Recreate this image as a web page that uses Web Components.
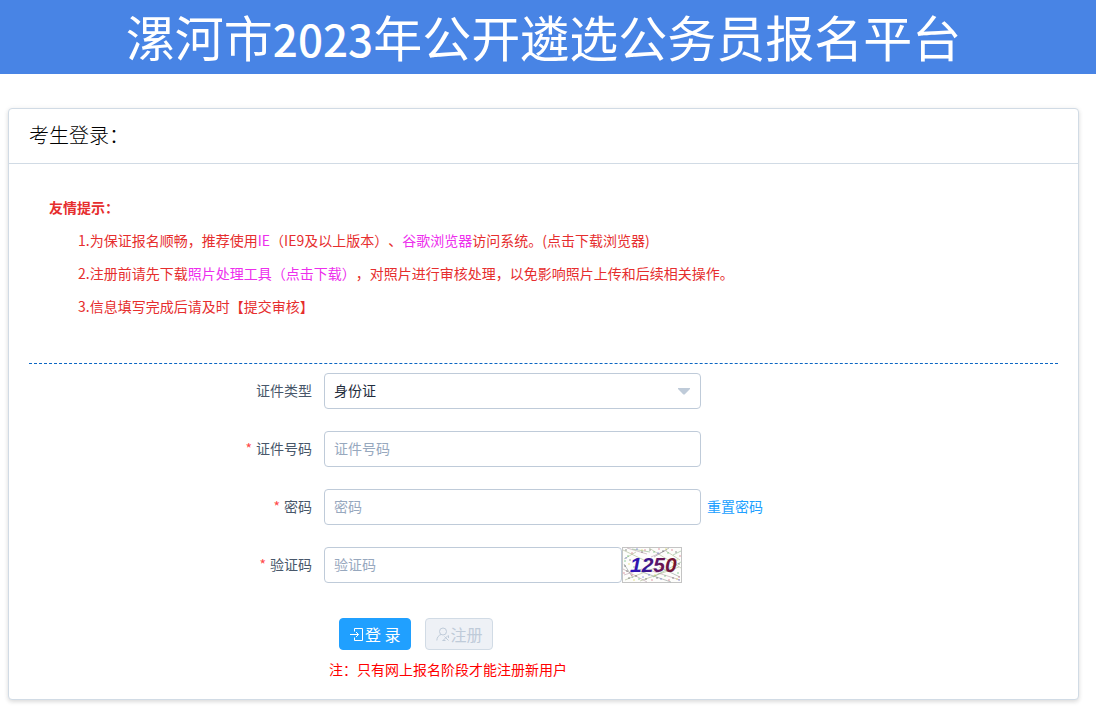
<!DOCTYPE html>
<html lang="zh-CN">
<head>
<meta charset="utf-8">
<meta name="viewport" content="width=device-width, initial-scale=1">
<title>漯河市2023年公开遴选公务员报名平台</title>
<style>
  body {
    margin: 0;
    background: #fff;
    color: #1f2d3d;
    font-family: "Noto Sans CJK SC", "Noto Sans", sans-serif;
    font-size: 14px;
    text-spacing-trim: space-all;
  }
</style>
</head>
<body>
<site-header>漯河市<span slot="year">2023</span><span slot="rest">年公开遴选公务员报名平台</span></site-header>

<login-card>
  <span slot="title">考生登录：</span>
  <login-tips></login-tips>
  <login-form></login-form>
</login-card>

<script>
class SiteHeader extends HTMLElement {
  constructor() {
    super();
    this.attachShadow({ mode: 'open' });
    this.shadowRoot.innerHTML = `
      <style>
        :host { display: block; background: #4884e5; color: #fff; }
        h1 {
          margin: 0;
          padding: 0 9px 3px 0;
          font-size: 49px;
          font-weight: 400;
          line-height: 71px;
          text-align: center;
          white-space: nowrap;
        }
        .year { font-size: 44px; font-weight: 500; line-height: 1; }
      </style>
      <h1><slot></slot><span class="year"><slot name="year"></slot></span><slot name="rest"></slot></h1>
    `;
  }
}

class LoginCard extends HTMLElement {
  constructor() {
    super();
    this.attachShadow({ mode: 'open' });
    this.shadowRoot.innerHTML = `
      <style>
        :host {
          display: block;
          margin: 34px 17px 6px 8px;
          border: 1px solid #d1dbe5;
          border-radius: 4px;
          background: #fff;
          box-shadow: 0 2px 4px rgba(0, 0, 0, .12), 0 0 6px rgba(0, 0, 0, .04);
        }
        h2 {
          margin: 0;
          padding: 0 20px 2px;
          border-bottom: 1px solid #d1dbe5;
          color: #000;
          font-size: 20px;
          font-weight: 300;
          line-height: 52px;
        }
        .body { padding: 27px 20px 13px; }
      </style>
      <h2><slot name="title"></slot></h2>
      <div class="body"><slot></slot></div>
    `;
  }
}

class LoginTips extends HTMLElement {
  constructor() {
    super();
    this.attachShadow({ mode: 'open' });
    this.shadowRoot.innerHTML = `
      <style>
        :host {
          display: block;
          padding: 0 20px 40px;
          border-bottom: 1px dashed #0b66c3;
          color: #e62e2e;
          line-height: 33px;
        }
        p { margin: 0; }
        p + p { padding-left: 29px; }
        .head { font-weight: 700; }
        a { color: #ed2eed; text-decoration: none; }
      </style>
      <p class="head">友情提示：</p>
      <p>1.为保证报名顺畅，推荐使用<a href="#ie">IE</a>（IE9及以上版本）、<a href="#chrome">谷歌浏览器</a>访问系统。(点击下载浏览器)</p>
      <p>2.注册前请先下载<a href="#tool">照片处理工具（点击下载）</a>，对照片进行审核处理，以免影响照片上传和后续相关操作。</p>
      <p>3.信息填写完成后请及时【提交审核】</p>
    `;
  }
}

// label on the left, input or select on the right, slot for what follows it
class FormField extends HTMLElement {
  constructor() {
    super();
    this.attachShadow({ mode: 'open' });
    const label = this.getAttribute('label') || '';
    const type = this.getAttribute('type') || 'text';
    const options = this.getAttribute('options');
    const control = options
      ? `<select id="control">${options.split(',').map(o => `<option>${o}</option>`).join('')}</select>`
      : `<input id="control" type="${type}" placeholder="${label}">`;

    this.shadowRoot.innerHTML = `
      <style>
        :host { display: flex; align-items: center; margin-bottom: 22px; line-height: 34px; }
        label {
          flex: none;
          width: 283px;
          margin-right: 12px;
          padding-bottom: 2px;
          color: #48576a;
          text-align: right;
        }
        :host([required]) label::before { content: "*"; margin-right: 4px; color: #ff4949; }
        .control { position: relative; flex: 0 1 377px; }
        :host([short]) .control { flex-basis: 298px; }
        input, select {
          display: block;
          box-sizing: border-box;
          width: 100%;
          height: 36px;
          margin: 0;
          padding: 0 9px 2px;
          border: 1px solid #bfcbd9;
          border-radius: 4px;
          background: #fff;
          color: #1f2d3d;
          font: inherit;
          line-height: normal;
          appearance: none;
          outline: none;
        }
        input:focus, select:focus { border-color: #20a0ff; }
        input::placeholder { color: #97a8be; opacity: 1; }
        .caret {
          position: absolute;
          top: 15px;
          right: 11px;
          width: 12px;
          height: 7px;
          fill: #bfcbd9;
          pointer-events: none;
        }
        ::slotted(a) { padding-bottom: 2px; }
      </style>
      <label for="control">${label}</label>
      <div class="control">
        ${control}
        ${options ? '<svg class="caret" viewBox="0 0 12 7"><path d="M0 0h12v1L6.600 6.600h-1.200L0 1z"/></svg>' : ''}
      </div>
      <slot></slot>
    `;
  }
}

class CaptchaImage extends HTMLElement {
  constructor() {
    super();
    this.attachShadow({ mode: 'open' });
    this.shadowRoot.innerHTML = `
      <style>
        :host { display: block; flex: none; }
        button { display: block; padding: 0; border: 0; background: none; cursor: pointer; }
        svg { display: block; width: 60px; height: 36px; }
        text { font: italic 700 21px "Liberation Sans", sans-serif; }
      </style>
      <button type="button" aria-label="验证码">
        <svg viewBox="0 0 60 36">
          <defs>
            <linearGradient id="ink" gradientUnits="userSpaceOnUse" x1="8" y1="0" x2="56" y2="0">
              <stop offset="0" stop-color="#2b14c4"/>
              <stop offset=".35" stop-color="#3a1590"/>
              <stop offset=".65" stop-color="#681455"/>
              <stop offset="1" stop-color="#7a1424"/>
            </linearGradient>
          </defs>
          <rect x=".5" y=".5" width="59" height="35" fill="#fdfdfb" stroke="#c4c4c4"/>
          <g fill="none" stroke-width=".6">
            <path stroke="#a9b58f" d="M1 3l25 12M2 12l12-7M27 1l32 20M44 4l14 9M3 33l30-12M18 34l39-14"/>
            <path stroke="#b99dab" d="M5 1l20 6M1 22l24 13M30 24l28 9M29 10l16-7M2 28l18-6"/>
            <path stroke="#8f9a9a" d="M14 23l35 12M37 20l21 10M2 17l9 14M47 1l-15 9"/>
            <path stroke="#8fb98f" d="M31 30l28-15M10 2l18 3M51 8l8-4"/>
          </g>
          <g stroke-width="1" stroke-linecap="square">
            <path stroke="#333" d="M4 3h0M8 13h0M3 19h0M7 31h0M14 29h0M20 5h0M28 3h0M41 4h0M54 5h0M57 17h0M35 31h0M51 31h0M24 32h0M5 24h0"/>
            <path stroke="#28a745" d="M6 9h0M12 20h0M17 32h0M32 5h0M46 6h0M56 26h0M43 29h0M3 14h0"/>
            <path stroke="#c43a52" d="M10 6h0M2 26h0M10 28h0M23 3h0M37 2h0M50 3h0M58 9h0M30 33h0M47 33h0M57 30h0"/>
            <path stroke="#3d49cc" d="M15 2h0M4 11h0M9 24h0M21 30h0M36 6h0M57 33h0M39 32h0M27 28h0"/>
            <path stroke="#d4c821" d="M20 3h0M7 17h0M12 33h0M44 2h0M55 13h0M55 32h0M33 28h0"/>
          </g>
          <text x="8" y="25" fill="url(#ink)">1250</text>
        </svg>
      </button>
    `;
  }
}

class IconButton extends HTMLElement {
  constructor() {
    super();
    this.attachShadow({ mode: 'open' });
    const icons = {
      login: '<path d="M4.500 4.500v-3h8v12h-8v-3M0 7.500h8.500M6 5l2.500 2.500L6 10"/>',
      register: '<circle cx="7" cy="4.500" r="3.500"/><path d="M5 7.500C2.600 8.400 1 10.200.8 13.500M7 13.500l5-5M8.500 9.500l4 4M12.500 8.500v2.500M9.500 13.500H6.500"/>'
    };

    this.shadowRoot.innerHTML = `
      <style>
        :host { display: block; }
        button {
          display: flex;
          align-items: center;
          gap: 1px;
          height: 32px;
          padding: 0 9px 0 10px;
          border: 1px solid #20a0ff;
          border-radius: 4px;
          background: #20a0ff;
          color: #fff;
          font: inherit;
          font-size: 16px;
          line-height: 30px;
          white-space: nowrap;
          cursor: pointer;
        }
        button:disabled {
          border-color: #d1dbe5;
          background: #eef1f6;
          color: #bfcbd9;
          cursor: not-allowed;
        }
        svg { flex: none; width: 14px; height: 14px; fill: none; stroke: currentColor; stroke-width: 1; }
      </style>
      <button type="button" ${this.hasAttribute('disabled') ? 'disabled' : ''}>
        <svg viewBox="0 0 14 14">${icons[this.getAttribute('icon')]}</svg>
        <span><slot></slot></span>
      </button>
    `;
  }
}

class LoginForm extends HTMLElement {
  constructor() {
    super();
    this.attachShadow({ mode: 'open' });
    this.shadowRoot.innerHTML = `
      <style>
        :host { display: block; padding-top: 9px; }
        form { margin: 0; }
        a { margin-left: 6px; color: #20a0ff; text-decoration: none; white-space: nowrap; }
        .actions { display: flex; gap: 14px; margin: 35px 0 0 310px; }
        .note { margin: 3px 0 0 300px; padding-bottom: 1px; color: #f00; line-height: 32px; }
      </style>
      <form>
        <form-field label="证件类型" options="身份证"></form-field>
        <form-field label="证件号码" required></form-field>
        <form-field label="密码" type="password" required><a href="#reset">重置密码</a></form-field>
        <form-field label="验证码" required short><captcha-image></captcha-image></form-field>
        <div class="actions">
          <icon-button icon="login">登 录</icon-button>
          <icon-button icon="register" disabled>注册</icon-button>
        </div>
        <p class="note">注：只有网上报名阶段才能注册新用户</p>
      </form>
    `;
  }
}

customElements.define('site-header', SiteHeader);
customElements.define('login-card', LoginCard);
customElements.define('login-tips', LoginTips);
customElements.define('form-field', FormField);
customElements.define('captcha-image', CaptchaImage);
customElements.define('icon-button', IconButton);
customElements.define('login-form', LoginForm);
</script>
</body>
</html>
